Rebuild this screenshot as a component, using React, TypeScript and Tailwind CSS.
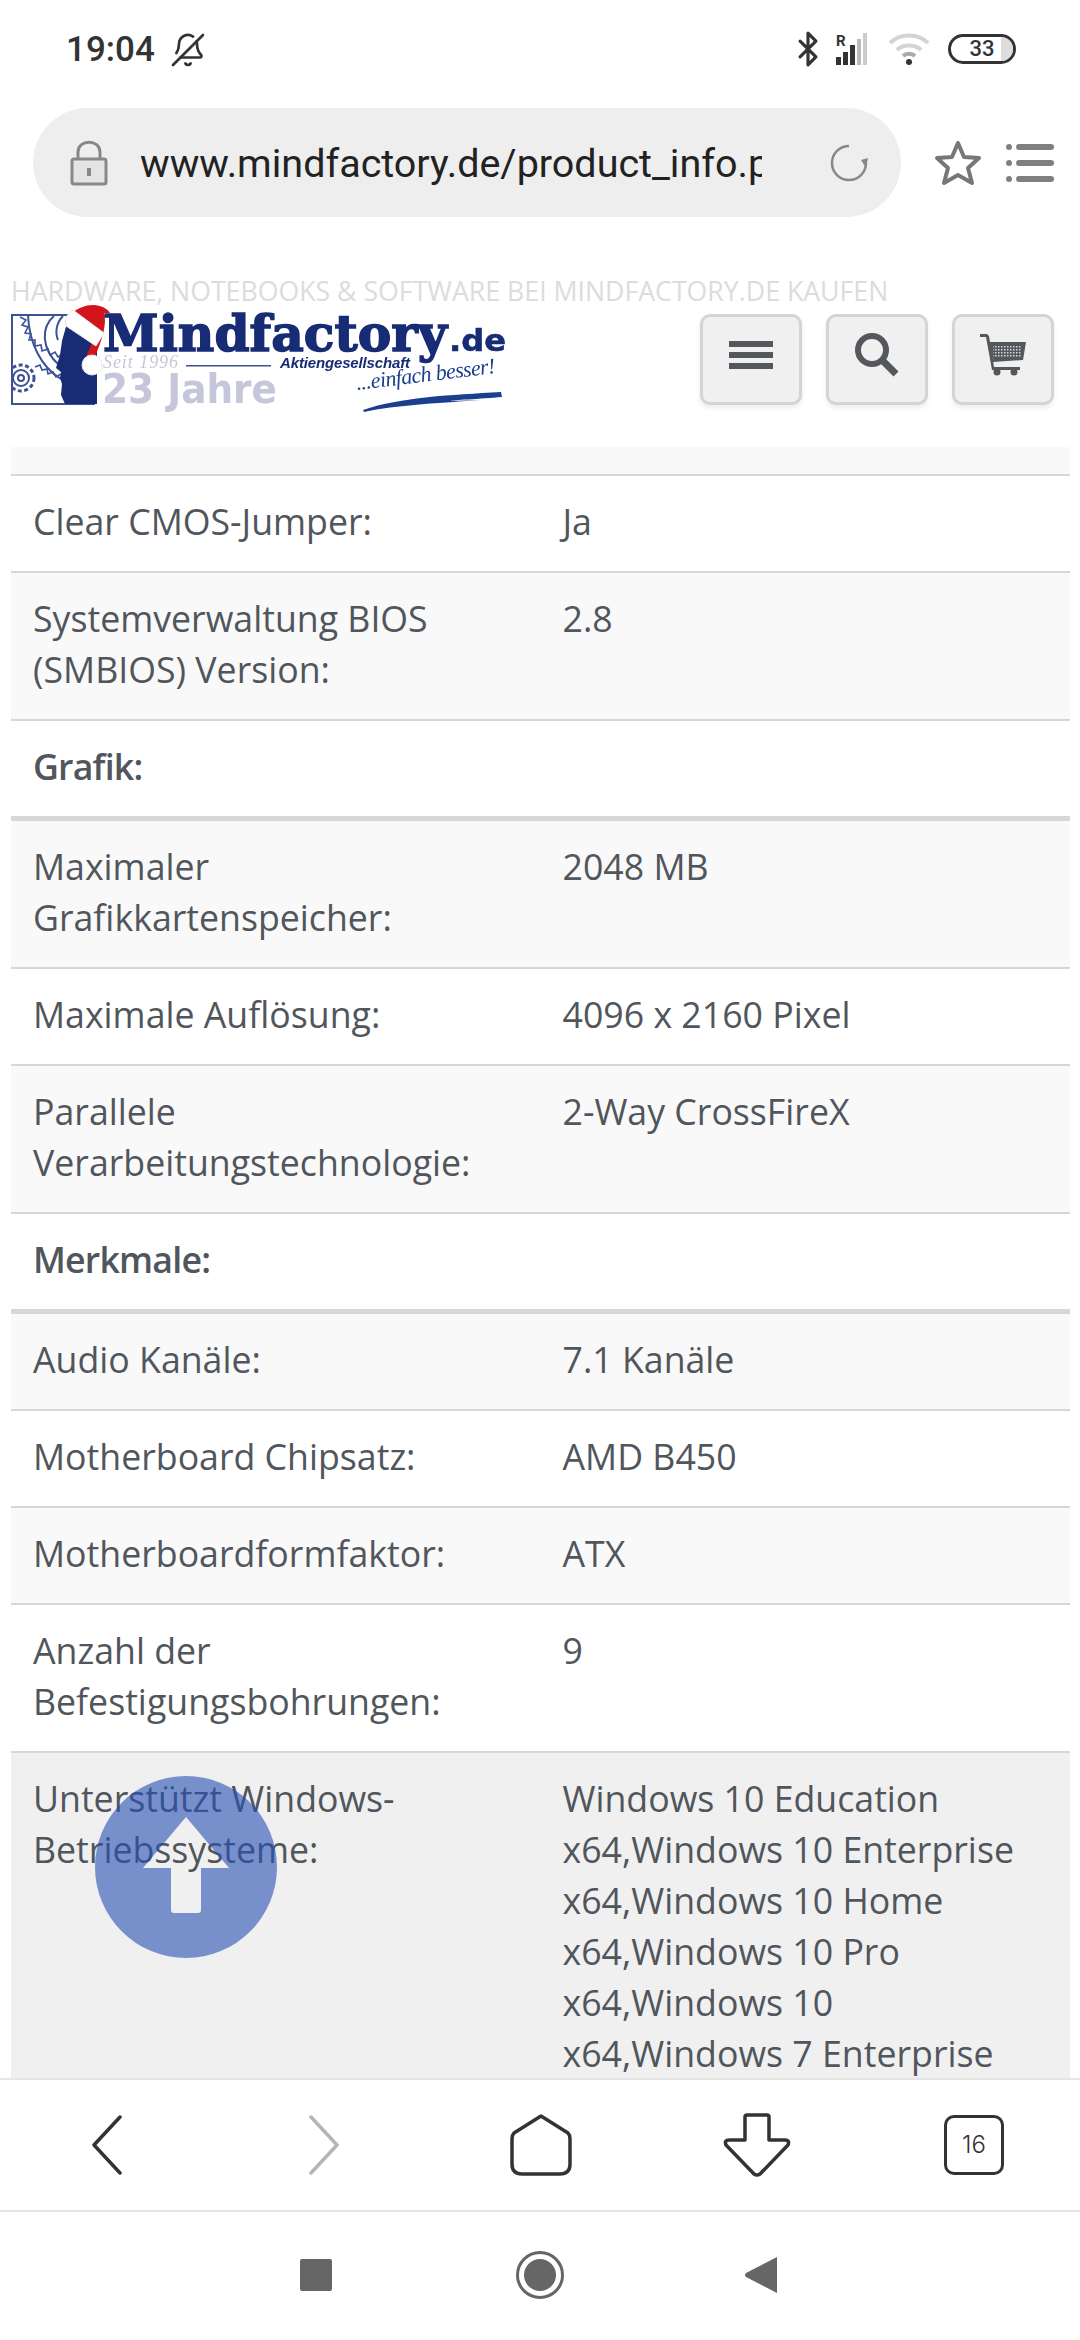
import React from "react";
import { BellOff, Bluetooth } from "lucide-react";

type Row = { l?: string; v?: string; s?: string };
const rows: Row[] = [
  { l: "Clear CMOS-Jumper:", v: "Ja" },
  { l: "Systemverwaltung BIOS (SMBIOS) Version:", v: "2.8" },
  { s: "Grafik:" },
  { l: "Maximaler Grafikkartenspeicher:", v: "2048 MB" },
  { l: "Maximale Auflösung:", v: "4096 x 2160 Pixel" },
  { l: "Parallele Verarbeitungstechnologie:", v: "2-Way CrossFireX" },
  { s: "Merkmale:" },
  { l: "Audio Kanäle:", v: "7.1 Kanäle" },
  { l: "Motherboard Chipsatz:", v: "AMD B450" },
  { l: "Motherboardformfaktor:", v: "ATX" },
  { l: "Anzahl der Befestigungsbohrungen:", v: "9" },
];

function SpecRow({ r, i }: { r: Row; i: number }) {
  if (r.s) {
    return (
      <div className="border-t-2 border-b-[5px] border-[#d7d7d7] bg-white px-[22px] pt-[20px] pb-[24px] font-semibold tracking-[-0.8px]">
        {r.s}
      </div>
    );
  }
  const afterSection = i > 0 && !!rows[i - 1].s;
  const bg = i % 2 === 1 ? "bg-[#f9f9f9]" : "bg-white";
  const border = afterSection ? "" : "border-t-2 border-[#d7d7d7]";
  return (
    <div className={`grid grid-cols-2 ${bg} ${border}`}>
      <div className="px-[22px] pt-[20px] pb-[24px]">{r.l}</div>
      <div className="px-[22px] pt-[20px] pb-[24px]">{r.v}</div>
    </div>
  );
}

function Logo() {
  return (
    <svg width="500" height="112" viewBox="0 0 500 112" className="shrink-0 blur-[0.5px]">
      <g fill="none" stroke="#3d5296" strokeWidth="2">
        <path d="M70 10 H1 V99 H84" />
        <path d="M9 12 l6 3 l-4 5 l6 2 l-3 6 l6 1 l-2 6 l6 0 l0 6 l6 -1 l1 6 l6 -2 l2 6 l5 -3 l3 5 l5 -4" strokeWidth="1.6" />
        <path d="M17 10 C18 38 30 62 50 74" />
        <path d="M43 11 C30 22 30 44 48 60" />
        <path d="M52 11 C45 18 44 28 47 35" />
        <circle cx="10" cy="73" r="13" strokeWidth="3" strokeDasharray="4 2.5" />
        <circle cx="10" cy="73" r="8" />
        <circle cx="10" cy="73" r="3" />
        <path d="M24 62 l5 -2 l2 5 l5 -1 l1 5 l5 -2 l3 5 l5 -3" strokeWidth="1.6" />
      </g>
      <path d="M56 18 L51 36 L49 50 L45 63 L50 67 L49 73 L51 79 L50 90 L54 99 L86 99 L86 30 Z" fill="#172c74" />
      <path d="M58 12 C64 3 75 0 82 0 C90 0 97 4 99 8 L93 8 C96 18 92 34 82 56 L75 52 C80 40 84 32 84 26 Z" fill="#d3151b" />
      <path d="M62 5 L93 28 L85 41 L55 21 Q52 11 62 5 Z" fill="#ffffff" stroke="#e8e8e8" />
      <circle cx="81" cy="60" r="10" fill="#ffffff" stroke="#e8e8e8" />
      <text x="92" y="46" fontSize="50" fontWeight="900" fontFamily="'DejaVu Serif',serif" fill="#172c74" stroke="#172c74" strokeWidth="1.5" textLength="344" lengthAdjust="spacingAndGlyphs">Mindfactory</text>
      <text x="438" y="46" fontSize="31" fontWeight="700" fontFamily="'DejaVu Sans',sans-serif" fill="#172c74" stroke="#172c74" strokeWidth="0.6" textLength="57" lengthAdjust="spacingAndGlyphs">.de</text>
      <text x="92" y="63" fontSize="18" fontStyle="italic" fontFamily="'Liberation Serif',serif" fill="#c6c6da" textLength="75">Seit 1996</text>
      <rect x="175" y="60" width="85" height="1.5" fill="#3d5296" />
      <text x="269" y="63" fontSize="15" fontWeight="700" fontStyle="italic" fontFamily="'Liberation Sans',sans-serif" fill="#172c74" textLength="130">Aktiengesellschaft</text>
      <text x="91" y="98" fontSize="41" fontWeight="700" fontFamily="'DejaVu Sans',sans-serif" fill="#c6c6da" textLength="175" lengthAdjust="spacingAndGlyphs">23 Jahre</text>
      <text x="346" y="85" fontSize="22" fontStyle="italic" fontFamily="'Liberation Serif',serif" fill="#1b3f8c" transform="rotate(-7 346 85)" textLength="140">...einfach besser!</text>
      <path d="M352 105 C390 92 440 90 490 87 L491 92 C470 94 440 95 440 96 L470 95 C430 98 385 100 353 107 Z" fill="#1b3f8c" />
    </svg>
  );
}

export default function App() {
  return (
    <div className="relative flex h-[2340px] w-[1080px] flex-col overflow-hidden bg-white font-['Open_Sans',sans-serif] text-[35.7px] leading-[51px] text-[#50565c]">
      {/* status bar */}
      <div className="flex h-[108px] shrink-0 items-start justify-between pl-[66px] pr-[64px] pt-[30px] font-['Roboto',sans-serif] text-[#333]">
        <div className="flex items-center gap-[15px]">
          <span className="text-[35px] font-medium leading-[40px]">19:04</span>
          <BellOff size={36} strokeWidth={1.8} className="-scale-x-100" />
        </div>
        <div className="flex items-center gap-[10px]">
          <Bluetooth size={38} strokeWidth={2} className="-mr-[3px]" />
          <svg width="44" height="36" viewBox="0 0 44 36">
            <text x="2" y="15" fontSize="15" fontWeight="700" fill="#333" fontFamily="Roboto">R</text>
            <rect x="2" y="26" width="5" height="8" fill="#333" />
            <rect x="9" y="21" width="5" height="13" fill="#333" />
            <rect x="16" y="14" width="5" height="20" fill="#333" />
            <rect x="23" y="8" width="4" height="26" fill="#bbb" />
            <rect x="29" y="2" width="4" height="32" fill="#ccc" />
          </svg>
          <svg width="42" height="34" viewBox="0 0 42 34" fill="none" stroke="#d4d4d4" strokeWidth="4">
            <path d="M2 11 C12 1 30 1 40 11" />
            <path d="M9 18 C15 12 27 12 33 18" />
            <path d="M15 24 C18 21 24 21 27 24" stroke="#aaa" />
            <circle cx="21" cy="30" r="3" fill="#333" stroke="none" />
          </svg>
          <div className="relative ml-[8px] flex h-[30px] w-[68px] items-center justify-center overflow-hidden rounded-full border-[3px] border-[#333] text-[22px] font-medium leading-none">
            <span className="absolute inset-y-0 right-0 w-[12px] bg-[#ddd]" />
            <span className="relative">33</span>
          </div>
        </div>
      </div>

      {/* url bar */}
      <div className="flex h-[109px] shrink-0 items-center pl-[33px]">
        <div className="flex h-[109px] w-[868px] items-center rounded-full bg-[#eeeeee] pl-[37px] font-['Roboto',sans-serif]">
          <svg width="38" height="46" viewBox="0 0 38 46" className="shrink-0" fill="none" stroke="#888" strokeWidth="3">
            <path d="M8 19 V12 C8 -1 30 -1 30 12 V19" />
            <rect x="2" y="19" width="34" height="25" rx="2" fill="#e4e4e4" />
            <path d="M19 28 V36" strokeWidth="4" />
          </svg>
          <div className="ml-[32px] mt-[2px] w-[622px] overflow-hidden whitespace-nowrap text-[39.5px] leading-[52px] text-[#222]">
            www.mindfactory.de/product_info.php/8GB
          </div>
          <svg width="38" height="38" viewBox="0 0 38 38" fill="none" stroke="#888" strokeWidth="2.5" className="ml-[68px] shrink-0">
            <path d="M19 2 A17 17 0 1 0 36 19" />
            <path d="M31 16 L36 24 L38 14 Z" fill="#888" stroke="none" />
          </svg>
        </div>
        <svg width="48" height="46" viewBox="0 0 48 46" fill="none" stroke="#777" strokeWidth="4" strokeLinejoin="round" className="ml-[33px]">
          <path d="M24 3 L30 17 L45 18 L34 28 L38 43 L24 35 L10 43 L14 28 L3 18 L18 17 Z" />
        </svg>
        <svg width="50" height="40" viewBox="0 0 50 40" className="ml-[24px]" fill="#808080">
          <circle cx="3" cy="4" r="3" />
          <rect x="10" y="1" width="38" height="6" rx="3" />
          <circle cx="3" cy="20" r="3" />
          <rect x="10" y="17" width="38" height="6" rx="3" />
          <circle cx="3" cy="36" r="3" />
          <rect x="10" y="33" width="38" height="6" rx="3" />
        </svg>
      </div>

      {/* site header */}
      <div className="flex h-[230px] shrink-0 flex-col px-[11px] pt-[56px]">
        <div className="whitespace-nowrap text-[26.7px] leading-[36px] text-[#dcdcdc]">
          HARDWARE, NOTEBOOKS &amp; SOFTWARE BEI MINDFACTORY.DE KAUFEN
        </div>
        <div className="-mt-[4px] flex items-start justify-between pr-[15px]">
          <Logo />
          <div className="mt-[9px] flex gap-[24px]">
            <Btn>
              <svg width="44" height="28" viewBox="0 0 44 28" fill="#54585c">
                <rect width="44" height="6" />
                <rect y="11" width="44" height="6" />
                <rect y="22" width="44" height="6" />
              </svg>
            </Btn>
            <Btn>
              <svg width="44" height="44" viewBox="0 0 44 44" fill="none" stroke="#54585c">
                <circle cx="17" cy="17" r="14" strokeWidth="6" />
                <path d="M27 27 L41 41" strokeWidth="7" />
              </svg>
            </Btn>
            <Btn>
              <svg width="46" height="42" viewBox="0 0 46 42">
                <defs>
                  <pattern id="cartgrid" width="3" height="3" patternUnits="userSpaceOnUse">
                    <rect width="3" height="3" fill="#54585c" />
                    <rect width="1.5" height="1.5" fill="#d8d8d8" />
                  </pattern>
                </defs>
                <path d="M0 0 H7 L9 2 L14 33 H40 V36 H12 L6 3 H0 Z" fill="#54585c" />
                <path d="M9 8 H46 L43 26 L13 28 Z" fill="#54585c" />
                <rect x="13" y="11" width="29" height="12" fill="url(#cartgrid)" />
                <circle cx="17" cy="38" r="3.5" fill="#54585c" />
                <circle cx="34" cy="38" r="3.5" fill="#54585c" />
              </svg>
            </Btn>
          </div>
        </div>
      </div>

      {/* table */}
      <main className="min-h-0 flex-1 overflow-hidden pl-[11px] pr-[10px]">
        <div className="h-[27px] bg-[#f9f9f9]" />
        {rows.map((r, i) => (
          <SpecRow key={i} r={r} i={i} />
        ))}
        <div className="grid grid-cols-2 border-t-2 border-[#d7d7d7] bg-[#f0f0f0]">
          <div className="px-[22px] pt-[20px] pb-[24px]">Unterstützt Windows-Betriebssysteme:</div>
          <div className="px-[22px] pt-[20px] pb-[24px]">
            Windows 10 Education x64,Windows 10 Enterprise x64,Windows 10 Home x64,Windows 10 Pro x64,Windows 10 x64,Windows 7 Enterprise x64,Windows 7 Home
          </div>
        </div>
      </main>

      {/* browser nav */}
      <nav className="flex h-[132px] shrink-0 items-center border-t-2 border-[#e6e6e6] bg-white pl-[91px]">
        <svg width="32" height="60" viewBox="0 0 32 60" fill="none" stroke="#333" strokeWidth="3.5" strokeLinecap="round" strokeLinejoin="round">
          <path d="M29 2 L3 30 L29 58" />
        </svg>
        <svg width="32" height="60" viewBox="0 0 32 60" fill="none" stroke="#b5b5b5" strokeWidth="3.5" strokeLinecap="round" strokeLinejoin="round" className="ml-[185px]">
          <path d="M3 2 L29 30 L3 58" />
        </svg>
        <svg width="62" height="62" viewBox="0 0 62 62" fill="none" stroke="#333" strokeWidth="3.5" strokeLinejoin="round" className="ml-[170px]">
          <path d="M31 2 L58 19 Q60 21 60 25 V50 Q60 60 50 60 H12 Q2 60 2 50 V25 Q2 21 4 19 Z" />
        </svg>
        <svg width="68" height="64" viewBox="0 0 68 64" fill="none" stroke="#333" strokeWidth="3.5" strokeLinejoin="round" className="ml-[151px]">
          <path d="M22 4 Q22 2 24 2 H44 Q46 2 46 4 V27 H62 Q67 27 65 32 L37 61 Q34 63 31 61 L3 32 Q1 27 6 27 H22 Z" />
        </svg>
        <div className="ml-[153px] flex h-[60px] w-[60px] items-center justify-center rounded-[10px] border-[3px] border-[#333] font-['Inter',sans-serif] text-[24px] font-light leading-none text-[#333]">
          16
        </div>
      </nav>

      {/* system nav */}
      <div className="flex h-[130px] shrink-0 items-center border-t-2 border-[#e6e6e6] bg-white pb-[2px] pl-[300px]">
        <div className="h-[32px] w-[32px] rounded-[2px] bg-[#666]" />
        <div className="ml-[184px] flex h-[48px] w-[48px] items-center justify-center rounded-full border-[3px] border-[#666]">
          <div className="h-[32px] w-[32px] rounded-full bg-[#666]" />
        </div>
        <svg width="32" height="36" viewBox="0 0 32 36" className="ml-[181px]" fill="#666">
          <path d="M32 0 V36 L1 20 Q-1 18 1 16 Z" />
        </svg>
      </div>

      {/* scroll to top */}
      <svg width="182" height="182" viewBox="0 0 182 182" className="absolute left-[95px] top-[1776px]">
        <path
          fillRule="evenodd"
          fill="#2650b4"
          fillOpacity="0.6"
          d="M91 0 A91 91 0 1 1 91 182 A91 91 0 1 1 91 0 Z M91 41 L48 92 H76 V134 Q76 137 79 137 H103 Q106 137 106 134 V92 H134 Z"
        />
      </svg>
    </div>
  );
}

function Btn({ children }: { children: React.ReactNode }) {
  return (
    <div className="flex h-[91px] w-[102px] items-center justify-center rounded-[10px] border-[3px] border-[#d4d4d4] bg-[#f0f0f0] pb-[10px] shadow-[0_3px_5px_rgba(0,0,0,0.08)]">
      {children}
    </div>
  );
}
